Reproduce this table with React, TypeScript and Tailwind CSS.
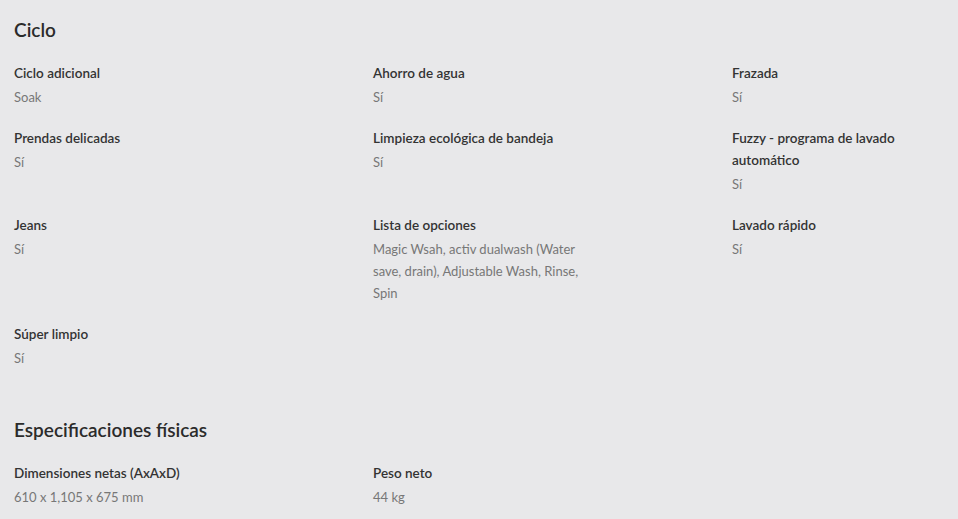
import React from 'react';

type Spec = { label: string; value: string };

const ciclo: Spec[] = [
  { label: 'Ciclo adicional', value: 'Soak' },
  { label: 'Ahorro de agua', value: 'Sí' },
  { label: 'Frazada', value: 'Sí' },
  { label: 'Prendas delicadas', value: 'Sí' },
  { label: 'Limpieza ecológica de bandeja', value: 'Sí' },
  { label: 'Fuzzy - programa de lavado automático', value: 'Sí' },
  { label: 'Jeans', value: 'Sí' },
  { label: 'Lista de opciones', value: 'Magic Wsah, activ dualwash (Water save, drain), Adjustable Wash, Rinse, Spin' },
  { label: 'Lavado rápido', value: 'Sí' },
  { label: 'Súper limpio', value: 'Sí' },
];

const fisicas: Spec[] = [
  { label: 'Dimensiones netas (AxAxD)', value: '610 x 1,105 x 675 mm' },
  { label: 'Peso neto', value: '44 kg' },
];

const Section: React.FC<{ title: string; items: Spec[] }> = ({ title, items }) => (
  <section className="mb-[29px]">
    <h2 className="text-[19px] leading-[26px] font-semibold text-[#2b2b2b] mb-[19px]">{title}</h2>
    <div className="grid grid-cols-[359px_359px_1fr]">
      {items.map((it, i) => (
        <div key={i} className="pb-[19px] max-w-[225px]">
          <div className="text-[13.5px] leading-[22px] font-semibold text-[#333]">{it.label}</div>
          <div className="mt-[2px] text-[13px] leading-[22px] text-[#777]">{it.value}</div>
        </div>
      ))}
    </div>
  </section>
);

export default function App() {
  return (
    <div
      className="w-[958px] h-[519px] overflow-hidden bg-[#e8e8ea] px-[14px] pt-[17px]"
      style={{ fontFamily: 'Lato, "Noto Sans", sans-serif' }}
    >
      <Section title="Ciclo" items={ciclo} />
      <Section title="Especificaciones físicas" items={fisicas} />
    </div>
  );
}
